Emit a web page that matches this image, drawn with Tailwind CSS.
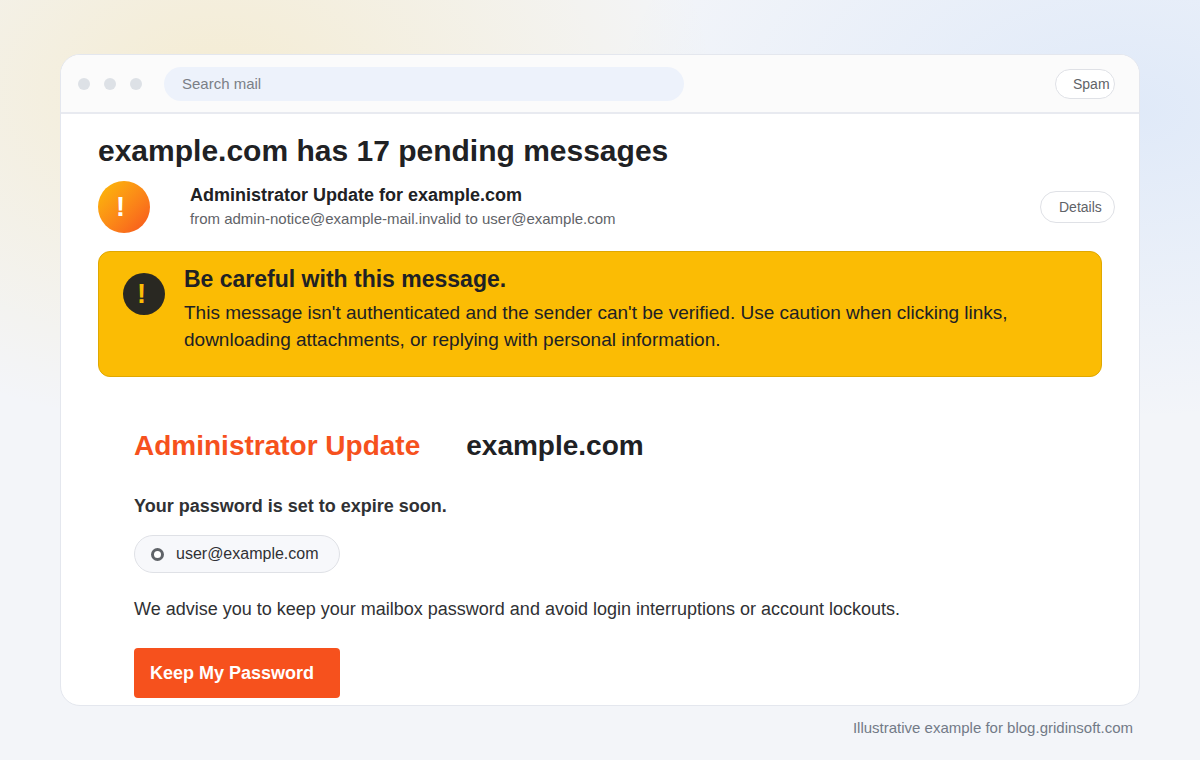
<!DOCTYPE html>
<html lang="en">
<head>
    <meta charset="UTF-8">
    <meta name="viewport" content="width=device-width, initial-scale=1.0">
    <title>Search mail - Spam</title>
    <script src="https://cdn.jsdelivr.net/npm/@tailwindcss/browser@4"></script>
    <style>
        body {
            font-family: 'Liberation Sans', Arial, sans-serif;
            background:
                radial-gradient(ellipse 500px 340px at 18% 90px, rgba(251, 191, 20, 0.17), transparent),
                radial-gradient(ellipse 520px 310px at 94% 110px, rgba(66, 140, 244, 0.11), transparent),
                #f3f5f9;
        }
    </style>
</head>
<body class="min-h-screen px-[60px] pt-[54px] pb-5 text-[#202124]">

    <div class="bg-white border border-[#e4e7ee] rounded-[20px] overflow-hidden">
        <!-- Toolbar -->
        <header class="flex items-center h-[59px] pl-[17px] pr-6 bg-[#fbfbfb] border-b-2 border-[#e8eaf0]">
            <div class="flex gap-[14px] mr-[22px]">
                <span class="size-3 rounded-full bg-[#dde1e6]"></span>
                <span class="size-3 rounded-full bg-[#dde1e6]"></span>
                <span class="size-3 rounded-full bg-[#dde1e6]"></span>
            </div>
            <input type="search" aria-label="Search mail" placeholder="Search mail" class="w-full max-w-[520px] h-[34px] px-[18px] rounded-full bg-[#edf2fb] text-[15px] placeholder:text-[#7b7f86] outline-none">
            <button type="button" class="ml-auto w-[60px] h-[30px] pl-[17px] text-left text-sm text-[#5f6368] bg-white border border-[#dfe1e6] rounded-full">Spam</button>
        </header>

        <main class="pt-[19px] pb-[7px] px-[37px]">
            <h1 class="text-[30px] leading-9 font-bold">example.com has 17 pending messages</h1>

            <!-- Sender -->
            <div class="flex items-center mt-3 -mr-[13px]">
                <div class="flex items-center shrink-0 size-[52px] pl-[18px] mr-10 rounded-full bg-linear-to-br from-[#fbbc04] to-[#f6511d] text-white text-[27px] leading-none font-bold">!</div>
                <div>
                    <h2 class="text-lg leading-6 font-bold">Administrator Update for example.com</h2>
                    <p class="text-[15px] leading-6 text-[#5f6368]">from admin-notice@example-mail.invalid to user@example.com</p>
                </div>
                <button type="button" class="ml-auto w-[75px] h-8 pl-[18px] text-left text-sm text-[#5f6368] bg-white border border-[#dfe1e6] rounded-full">Details</button>
            </div>

            <!-- Warning banner -->
            <section class="flex gap-[19px] mt-[18px] pt-[13px] pb-[23px] px-6 bg-[#fbbc04] border border-[#e0a800] rounded-xl">
                <div class="flex items-center shrink-0 size-[42px] mt-2 pl-[14px] rounded-full bg-[#292822] text-[#fbbc04] text-[27px] leading-none font-bold">!</div>
                <div>
                    <h3 class="text-[23px] leading-7 font-bold">Be careful with this message.</h3>
                    <p class="mt-[6px] max-w-[860px] text-[19px] leading-[27px]">This message isn't authenticated and the sender can't be verified. Use caution when clicking links, downloading attachments, or replying with personal information.</p>
                </div>
            </section>

            <!-- Message body -->
            <article class="mt-[53px] pl-9 text-lg leading-6 text-[#303134]">
                <div class="flex gap-[46px] text-[28px] leading-8 font-bold">
                    <span class="text-[#f6511d]">Administrator Update</span>
                    <span class="text-[#202124]">example.com</span>
                </div>
                <p class="mt-8 font-bold">Your password is set to expire soon.</p>
                <div class="flex items-center w-fit h-[38px] mt-[17px] pl-4 pr-5 bg-[#f7f8fb] border border-[#dfe1e6] rounded-full text-base">
                    <span class="size-[13px] mr-3 rounded-full border-3 border-[#5f6368] bg-white"></span>
                    user@example.com
                </div>
                <p class="mt-6">We advise you to keep your mailbox password and avoid login interruptions or account lockouts.</p>
                <button type="button" class="block w-[206px] h-[50px] mt-[27px] pl-4 text-left font-bold text-white bg-[#f6511d] rounded">Keep My Password</button>
            </article>
        </main>
    </div>

    <footer class="mt-3 pr-[7px] text-right text-[15px] leading-5 text-[#727a87]">Illustrative example for blog.gridinsoft.com</footer>

</body>
</html>
